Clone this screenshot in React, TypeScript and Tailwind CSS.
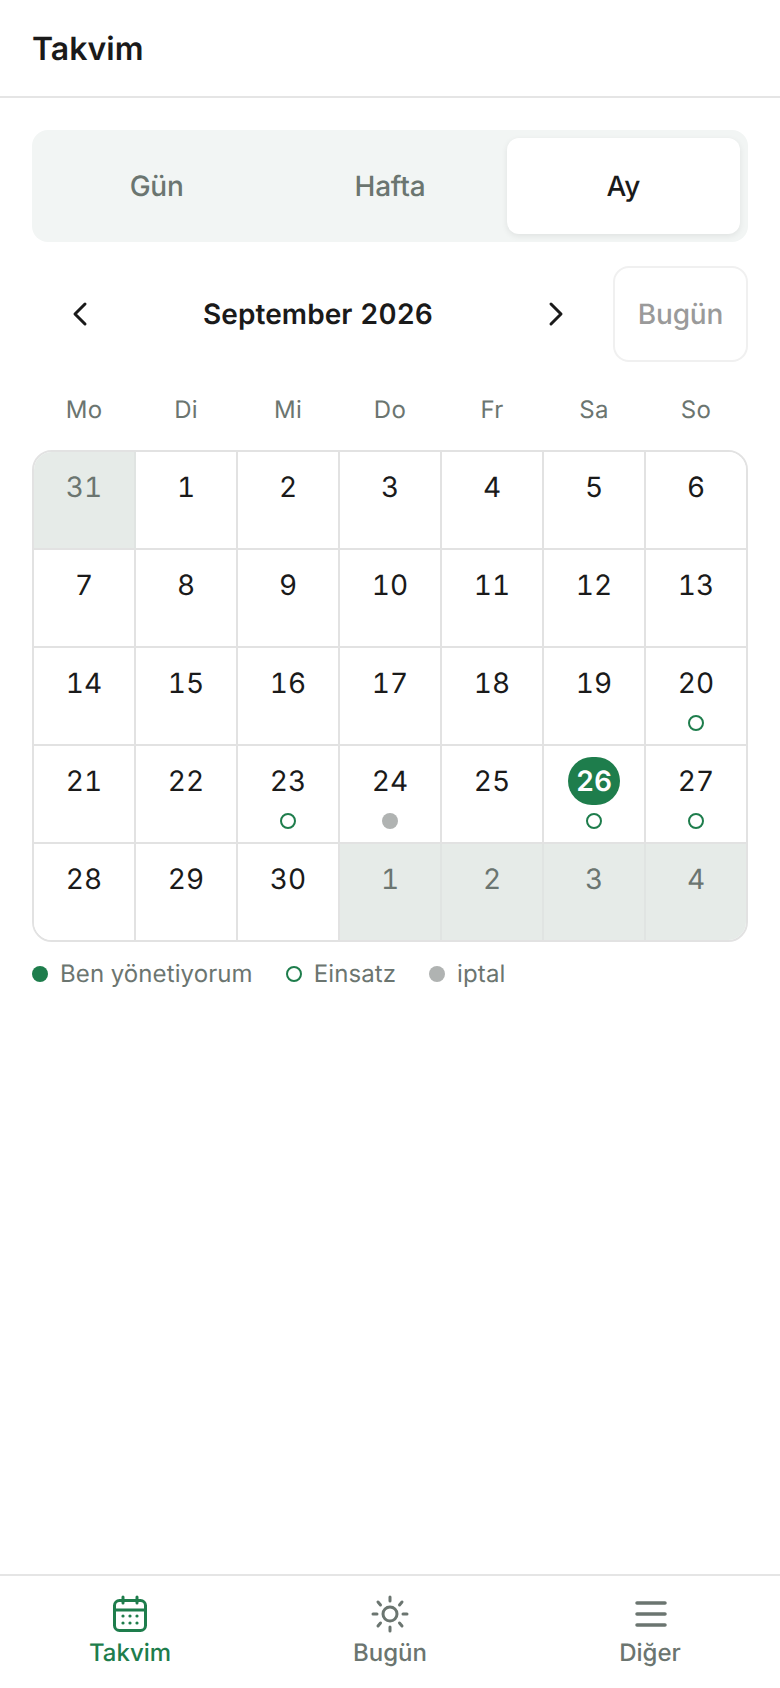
const weekdays = ["Mo", "Di", "Mi", "Do", "Fr", "Sa", "So"]

type Day = { n: number; out?: boolean; today?: boolean; mark?: "ring" | "gray" }

const days: Day[] = [
  { n: 31, out: true }, { n: 1 }, { n: 2 }, { n: 3 }, { n: 4 }, { n: 5 }, { n: 6 },
  { n: 7 }, { n: 8 }, { n: 9 }, { n: 10 }, { n: 11 }, { n: 12 }, { n: 13 },
  { n: 14 }, { n: 15 }, { n: 16 }, { n: 17 }, { n: 18 }, { n: 19 }, { n: 20, mark: "ring" },
  { n: 21 }, { n: 22 }, { n: 23, mark: "ring" }, { n: 24, mark: "gray" }, { n: 25 }, { n: 26, today: true, mark: "ring" }, { n: 27, mark: "ring" },
  { n: 28 }, { n: 29 }, { n: 30 }, { n: 1, out: true }, { n: 2, out: true }, { n: 3, out: true }, { n: 4, out: true },
]

function Cell({ day, col, row }: { day: Day; col: number; row: number }) {
  const right = col < 6 ? (day.out ? "border-r-2 border-r-[#e0e4e2]" : "border-r-2 border-r-[#e2e2e2]") : ""
  const bottom = row < 4 ? "border-b-2 border-b-[#e2e2e2]" : ""
  const height = row < 4 ? "h-[98px]" : "h-[96px]"
  return (
    <div className={`flex ${height} flex-col items-center pt-[11px] ${right} ${bottom} ${day.out ? "bg-[#e6ebe8]" : "bg-white"}`}>
      {day.today ? (
        <div className="flex h-[48px] w-[52px] items-center justify-center rounded-full bg-[#1e7d4c] text-[28px] font-semibold text-white">{day.n}</div>
      ) : (
        <div className={`flex h-[48px] items-center justify-center text-[28px] ${day.out ? "text-[#6b7570]" : "text-[#1a1a1a]"}`}>{day.n}</div>
      )}
      {day.mark === "ring" && <span className="mt-[8px] h-[16px] w-[16px] rounded-full border-2 border-[#1e7d4c]" />}
      {day.mark === "gray" && <span className="mt-[8px] h-[16px] w-[16px] rounded-full bg-[#b0b3b2]" />}
    </div>
  )
}

export default function App() {
  return (
    <div className="flex h-[1688px] w-[780px] flex-col bg-white font-['Inter',sans-serif] tabular-nums [text-rendering:geometricPrecision]">
      <header className="flex h-[98px] items-center border-b-2 border-[#e5e5e5] px-[32px] pt-[1px]">
        <h1 className="text-[32px] font-semibold text-[#1a1a1a]">Takvim</h1>
      </header>

      <main className="flex-1 px-[32px] pt-[32px]">
        <div className="flex h-[112px] items-center rounded-[16px] bg-[#f2f5f4] p-[8px] text-[28px] font-medium tracking-[-0.2px]">
          <div className="flex h-[96px] flex-1 items-center justify-center text-[#6b7570]">Gün</div>
          <div className="flex h-[96px] flex-1 items-center justify-center text-[#6b7570]">Hafta</div>
          <div className="flex h-[96px] flex-1 items-center justify-center rounded-[12px] bg-white text-[#1a1a1a] shadow-[0_2px_6px_rgba(0,0,0,0.08)]">Ay</div>
        </div>

        <div className="mt-[24px] flex h-[96px] items-center">
          <div className="flex w-[580px] items-center justify-between pl-[35px] pr-[43px]">
            <svg width="24" height="28" viewBox="0 0 24 28" fill="none" stroke="#1a1a1a" strokeWidth="3" strokeLinecap="round" strokeLinejoin="round"><path d="M18 4 8 14l10 10" /></svg>
            <span className="text-[28px] font-semibold tracking-[0.1px] text-[#1a1a1a]">September 2026</span>
            <svg width="24" height="28" viewBox="0 0 24 28" fill="none" stroke="#1a1a1a" strokeWidth="3" strokeLinecap="round" strokeLinejoin="round"><path d="m6 4 10 10L6 24" /></svg>
          </div>
          <div className="ml-auto flex h-[96px] w-[135px] items-center justify-center rounded-[16px] border-2 border-[#f0f0f0] text-[28px] font-medium tracking-[-0.2px] text-[#9a9a9a]">Bugün</div>
        </div>

        <div className="mt-[24px] grid grid-cols-[repeat(7,102px)] pl-[1px]">
          {weekdays.map((d) => (
            <div key={d} className="flex h-[48px] items-center justify-center text-[24px] tracking-[0.3px] text-[#6b7570]">{d}</div>
          ))}
        </div>

        <div className="mt-[16px] grid grid-cols-[repeat(6,102px)_100px] overflow-hidden rounded-[20px] border-2 border-[#e2e2e2]">
          {days.map((day, i) => (
            <Cell key={i} day={day} col={i % 7} row={Math.floor(i / 7)} />
          ))}
        </div>

        <div className="mt-[14px] flex items-center text-[24px] tracking-[0.1px] text-[#6b7570]">
          <span className="h-[16px] w-[16px] rounded-full bg-[#1e7d4c]" />
          <span className="ml-[12px]">Ben yönetiyorum</span>
          <span className="ml-[33px] h-[16px] w-[16px] rounded-full border-2 border-[#1e7d4c]" />
          <span className="ml-[12px]">Einsatz</span>
          <span className="ml-[33px] h-[16px] w-[16px] rounded-full bg-[#b0b3b2]" />
          <span className="ml-[12px]">iptal</span>
        </div>
      </main>

      <nav className="flex h-[114px] border-t-2 border-[#e5e5e5] text-[24px] font-medium">
        <div className="flex w-[260px] flex-col items-center pt-[19px] text-[#1e7d4c]">
          <svg width="36" height="38" viewBox="0 0 36 38" fill="none" stroke="#1e7d4c" strokeWidth="3" strokeLinecap="round">
            <rect x="2.5" y="5.5" width="31" height="30" rx="5" />
            <path d="M2.5 15h31M11 2v6M25 2v6" />
            <g fill="#1e7d4c" stroke="none">
              <circle cx="11" cy="21" r="1.6" /><circle cx="18" cy="21" r="1.6" /><circle cx="25" cy="21" r="1.6" />
              <circle cx="11" cy="28" r="1.6" /><circle cx="18" cy="28" r="1.6" /><circle cx="25" cy="28" r="1.6" />
            </g>
          </svg>
          <span className="mt-[4px] leading-[32px]">Takvim</span>
        </div>
        <div className="flex w-[260px] flex-col items-center pt-[19px] text-[#6b7570]">
          <svg width="38" height="38" viewBox="0 0 38 38" fill="none" stroke="#6b7570" strokeWidth="3" strokeLinecap="round">
            <circle cx="19" cy="19" r="7" />
            <path d="M19 2v4M19 32v4M2 19h4M32 19h4M7 7l2.5 3M31 7l-2.5 3M7 31l2.5-3M31 31l-2.5-3" />
          </svg>
          <span className="mt-[4px] leading-[32px]">Bugün</span>
        </div>
        <div className="flex w-[260px] flex-col items-center pt-[19px] text-[#6b7570]">
          <svg width="38" height="38" viewBox="0 0 38 38" fill="none" stroke="#6b7570" strokeWidth="3.5" strokeLinecap="round">
            <path d="M6 8h28M6 19h28M6 30h28" />
          </svg>
          <span className="mt-[4px] leading-[32px]">Diğer</span>
        </div>
      </nav>
    </div>
  )
}
